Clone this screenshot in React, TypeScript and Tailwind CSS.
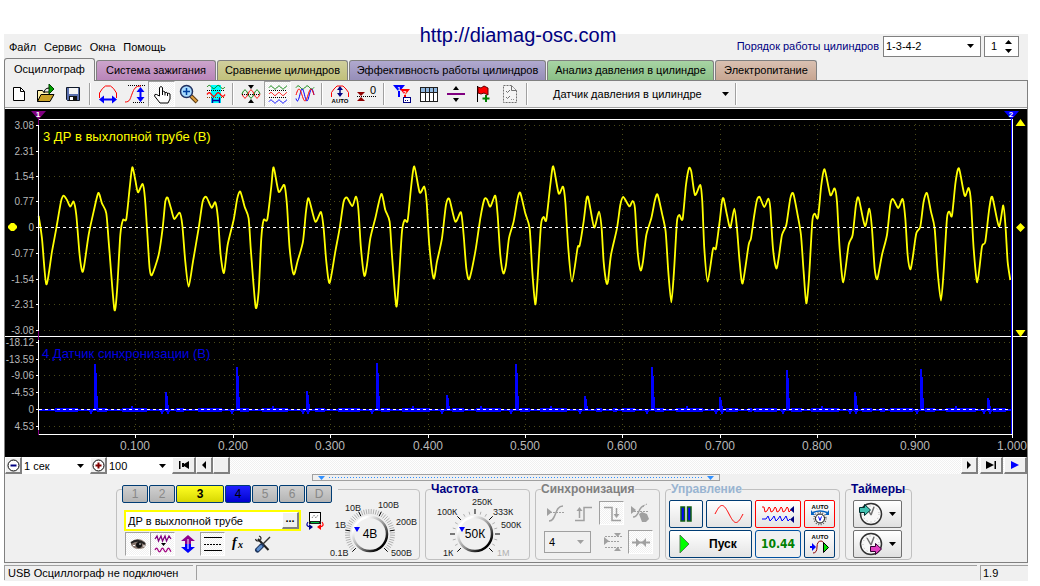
import { useState, type ReactNode } from 'react';
import { clsx } from 'clsx';

/* ---------- trace data ---------- */

// Samples of the exhaust channel, three units per pixel, split in sweeps
const exhaustSweeps = [
  {
    start: 0,
    points:
      '115,333 125,400 138,538 155,440 168,370 182,290 190,272 200,285 210,305 220,290 228,330 238,450 246,500 252,480 265,390 280,320 294,264 305,295 318,325 326,420 342,612 350,560 360,390 368,345 378,342 388,250 396,187 405,225 413,262 427,237 434,280 442,400 448,490 455,510 475,450 487,370 495,290 502,278 512,310 522,342 538,323 546,360 555,470 565,545 578,470 595,370 607,290 618,276 634,308 645,292 653,340 661,450 671,504 682,420 700,345 711,280 720,260 733,305 745,340 752,440 766,606 775,560 783,400 790,345 801,343 813,245 820,187 835,260 852,240 860,300 868,430 880,508 892,468 908,410 917,320 925,280 945,350 962,321 970,370 978,470 988,534 1005,440 1018,370',
  },
  {
    start: 1020,
    points:
      '10,290 20,278 36,303 47,275 54,310 62,430 72,512 80,480 90,400 105,340 123,267 135,315 148,350 155,450 168,604 176,520 185,380 193,345 202,347 212,250 222,184 238,262 252,245 259,290 267,420 280,520 290,470 305,400 317,300 327,282 345,350 362,322 370,390 378,490 387,522 405,440 420,340 432,283 440,283 450,305 465,272 472,330 480,450 489,505 497,480 506,400 520,350 532,280 540,264 555,325 568,370 576,500 585,598 592,520 602,360 610,336 618,345 630,240 639,184 655,265 668,245 675,290 684,430 695,530 712,428 718,422 730,350 738,285 743,275 750,310 762,368 776,320 784,370 790,470 798,532 803,530 812,450 830,370 840,300 849,276 867,304 877,288 884,310 892,440 901,496 908,470 918,390 933,340 944,285 952,269 965,325 976,380 984,500 993,592 1001,500 1010,350 1017,330 1027,342 1037,240 1046,190',
  },
  {
    start: 2070,
    points:
      '3,200 14,270 30,240 36,290 42,430 52,530 68,432 77,430 88,350 95,290 100,281 110,330 120,368 132,311 140,370 148,470 157,535 175,420 182,400 192,330 200,285 208,276 222,306 234,281 240,310 248,430 258,490 265,460 275,390 288,360 300,280 309,266 322,330 332,390 340,500 348,595 356,520 366,350 373,326 383,338 393,240 403,193 420,270 433,250 440,290 448,430 459,532 475,420 487,390 497,300 505,279 524,363 537,311 545,370 553,490 561,522 575,450 590,390 600,300 608,282 624,309 637,282 645,340 652,450 660,493 667,460 678,385 690,365 700,290 710,264 722,320 733,370 742,500 752,587 760,500 770,340 777,320 785,332 796,230 806,190 823,272 835,249 842,290 850,430 861,532 875,425 885,410 897,310 906,276 926,364 939,301 946,370 952,470 960,525',
  },
];

const TOP = 105;

const exhaust = exhaustSweeps.flatMap(({ start, points }) =>
  points.split(' ').map((p) => {
    const [x, y] = p.split(',').map(Number);
    return [(start + x) / 3 + 0.3, TOP + y / 3] as const;
  })
);

// Joins samples with cubic segments whose control points keep peaks flat
function smoothPath(pts: readonly (readonly [number, number])[]) {
  let d = `M${pts[0][0]},${pts[0][1]}`;
  for (let i = 0; i < pts.length - 1; i++) {
    const p0 = pts[Math.max(0, i - 1)];
    const p1 = pts[i];
    const p2 = pts[i + 1];
    const p3 = pts[Math.min(pts.length - 1, i + 2)];
    const k = 8;
    d += `C${p1[0] + (p2[0] - p0[0]) / k},${p1[1] + (p2[1] - p0[1]) / k} ${p2[0] - (p3[0] - p1[0]) / k},${p2[1] - (p3[1] - p1[1]) / k} ${p2[0]},${p2[1]}`;
  }
  return d;
}

const syncSpikes = [
  [94, 364], [165, 392], [236, 367], [306, 391], [376, 363], [446, 395], [515, 364],
  [584, 396], [651, 367], [719, 397], [786, 370], [854, 392], [920, 369], [987, 398],
];

const syncNoise = [
  [55, 78], [97, 107], [122, 147], [176, 184], [198, 222], [240, 249], [262, 288], [315, 325],
  [338, 360], [381, 390], [402, 430], [452, 464], [476, 501], [520, 530], [540, 567], [596, 602],
  [613, 617], [622, 635], [655, 664], [676, 703], [726, 738], [748, 752], [754, 777], [791, 802],
  [811, 839], [862, 872], [880, 885], [890, 913], [925, 935], [946, 976], [993, 1006],
];

const syncDips = [91, 162, 168, 232, 303, 308, 372, 442, 511, 580, 647, 716, 722, 783, 850, 856, 917, 984, 990];
const syncBumps = [132, 273, 413, 481, 551, 687, 822, 956];

const upperScale = [
  [125, '3.08'], [151, '2.31'], [176, '1.54'], [201, '0.77'], [227, '0'],
  [253, '-0.77'], [279, '-1.54'], [304, '-2.31'], [330, '-3.08'],
] as const;

const lowerScale = [
  [342, '-18.12'], [359, '-13.59'], [375, '-9.06'], [392, '-4.53'], [409, '0'], [426, '4.53'],
] as const;

const timeScale = [
  [135, '0.100'], [233, '0.200'], [330, '0.300'], [428, '0.400'], [525, '0.500'],
  [622, '0.600'], [720, '0.700'], [817, '0.800'], [915, '0.900'], [1012, '1.000'],
] as const;

/* ---------- chart ---------- */

function Chart() {
  return (
    <svg
      viewBox="5 109 1022 348"
      className="block w-full bg-black font-['Liberation_Sans',sans-serif]"
      role="img"
      aria-label="Осциллограмма"
    >
      <g stroke="#4a4a18" strokeDasharray="1 4" shapeRendering="crispEdges">
        {[...upperScale, ...lowerScale].map(([y, label]) =>
          label === '0' ? null : <path key={y} d={`M44 ${y + 0.5}H1010`} />
        )}
        {timeScale.slice(0, 9).map(([x]) => (
          <path key={x} d={`M${x + 0.5} 124V433`} />
        ))}
      </g>

      <g fill="#b8b8b8" fontSize="10" textAnchor="end">
        {[...upperScale, ...lowerScale].map(([y, label]) => (
          <text key={y} x="34" y={y + 4}>
            {label}
          </text>
        ))}
      </g>
      <g fill="#b8b8b8" fontSize="12" textAnchor="middle">
        {timeScale.map(([x, label]) => (
          <text key={x} x={x} y="450">
            {label}
          </text>
        ))}
      </g>

      <text x="43" y="141" fontSize="13" fill="#ffff00">
        3 ДР в выхлопной трубе (В)
      </text>
      <text x="42" y="358" fontSize="13" fill="#0000e0">
        4 Датчик синхронизации (В)
      </text>

      {/* exhaust pressure */}
      <path d={smoothPath(exhaust)} fill="none" stroke="#ffff00" strokeWidth="1.8" strokeLinejoin="round" />

      {/* sync sensor */}
      <g fill="#0000ff" shapeRendering="crispEdges">
        <rect x="39" y="409" width="973" height="2" />
        {syncNoise.map(([a, b]) => (
          <rect key={a} x={a} y="408" width={b - a} height="4" />
        ))}
        {syncDips.map((x) => (
          <path key={x} d={`M${x - 2} 410h4l-1 4h-2z`} />
        ))}
        {syncBumps.map((x) => (
          <rect key={x} x={x - 1} y="406" width="2" height="3" />
        ))}
        {syncSpikes.map(([x, y]) => (
          <path key={x} d={`M${x} 410V${y}h2l1 ${(410 - y) * 0.4}l1 ${(410 - y) * 0.6}z`} />
        ))}
      </g>

      <g stroke="#ffffff" shapeRendering="crispEdges">
        <path d="M38.5 119V435M1012.5 119V438M38 119.5H1013M5 336.5H1027M38 434.5H1013" />
        <path d="M39 227.5H1012M39 409.5H1012" strokeDasharray="3 3" />
        {[...upperScale, ...lowerScale].map(([y]) => (
          <path key={y} d={`M36 ${y + 0.5}h3`} />
        ))}
        {timeScale.map(([x]) => (
          <path key={x} d={`M${x + 0.5} 435v3`} />
        ))}
      </g>
      <path d="M1011.5 119V434" stroke="#0000ff" shapeRendering="crispEdges" />
      <path d="M38.5 119v6M38.5 331v9M38.5 430v5" stroke="#800080" shapeRendering="crispEdges" />

      {/* cursors and level markers */}
      <path d="M31 111h15l-7 8h-1z" fill="#800080" />
      <path d="M1004 111h15l-7 8h-1z" fill="#0000ff" />
      <g fill="#ffffff" fontSize="8" fontWeight="bold" textAnchor="middle">
        <text x="38" y="117">1</text>
        <text x="1011" y="117">2</text>
      </g>
      <g fill="#ffff00">
        <path d="M11 223h3l3 3v2l-3 3h-3l-3-3v-2z" />
        <path d="M1020.500 119l5 7h-10zM1020.500 337l5-7h-10zM1020.500 223l4.500 4.500-4.500 4.500-4.500-4.500z" />
      </g>
    </svg>
  );
}

/* ---------- icons ---------- */

function wave(x0: number, x1: number, y: number, amp: number, period: number, phase = 0) {
  let d = '';
  for (let x = x0; x <= x1; x += 0.5) {
    const v = y - amp * Math.sin(((x - x0) / period + phase) * Math.PI * 2);
    d += `${d ? 'L' : 'M'}${x},${v.toFixed(2)}`;
  }
  return d;
}

function Icon({ children, className }: { children: ReactNode; className?: string }) {
  return (
    <svg viewBox="0 0 22 22" className={clsx('block size-[22px] shrink-0', className)} fill="none" aria-hidden>
      {children}
    </svg>
  );
}

const NewIcon = (
  <Icon>
    <path d="M5.500 4.500h7l4 4v9h-11z" fill="#fff" stroke="#000" />
    <path d="M12.500 4.500v4h4" stroke="#000" />
  </Icon>
);

const OpenIcon = (
  <Icon>
    <path d="M2.500 18.500v-11h5l1 1.500h6v3" fill="#fff3b0" stroke="#000" />
    <path d="M2.500 18.500l3.500-7h13l-4 7z" fill="#c9a227" stroke="#000" />
    <path d="M14 1l5 5-5 5z" fill="#00a000" stroke="#004000" />
    <path d="M9 10c0-3 2-5 5-5" stroke="#000" />
  </Icon>
);

const SaveIcon = (
  <Icon>
    <path d="M4.500 4.500h13v13h-12l-1-1z" fill="#5a6fae" stroke="#101828" />
    <rect x="7" y="5" width="9" height="6" fill="#f4f4f4" />
    <rect x="7" y="13" width="8" height="5" fill="#111" />
    <rect x="8" y="14" width="3" height="3" fill="#fff" />
  </Icon>
);

const HScaleIcon = (
  <Icon>
    <path d="M2.500 15V10l3-4.500L8.500 3h5L16.500 5.500l3 4.500v5" stroke="#ff0000" />
    <path d="M5 16.500h12" stroke="#0000ff" strokeWidth="2" />
    <path d="M2 16.500l5-4v8zM20 16.500l-5-4v8z" fill="#0000ff" />
  </Icon>
);

const VScaleIcon = (
  <Icon>
    <path d="M4 2.500h17M9 19.500h12" stroke="#000" strokeDasharray="1 1" />
    <path d="M1 19c5 0 5-3 7-8s3-8 9-8" stroke="#ff0000" />
    <path d="M16.500 7v9" stroke="#0000ff" strokeWidth="2" />
    <path d="M16.500 4l4 5h-8zM16.500 19l4-5h-8z" fill="#0000ff" />
  </Icon>
);

const HandIcon = (
  <Icon>
    <path
      d="M8.500 13V4.500q1.500-2 3 0V9q1-1.500 2.500 0v1q1-1.500 2.500 0v1q1-1.500 2.500 0v5l-2 4H9l-5.500-7q0-2.500 2-1.500z"
      fill="#fff"
      stroke="#000"
    />
    <path d="M11.500 9v3M14 10v2.500M16.500 11v2" stroke="#000" />
  </Icon>
);

const ZoomIcon = (
  <Icon>
    <path d="M13 13l6 6" stroke="#5a3a10" strokeWidth="4" />
    <path d="M13 13l5.500 5.500" stroke="#e0a040" strokeWidth="2" />
    <circle cx="8.500" cy="8.500" r="6" fill="#a8dcff" stroke="#203060" strokeWidth="1.500" />
    <path d="M8.500 5v7M5 8.500h7" stroke="#0040a0" strokeWidth="1.500" />
  </Icon>
);

const MeasureIcon = (
  <Icon>
    <rect x="6" y="2" width="10" height="18" fill="#00ffff" />
    <path d={wave(2, 20, 4, 1.6, 9)} stroke="#008000" />
    <path d="M2 7.500h18" stroke="#000" strokeDasharray="1 1" />
    <path d={wave(2, 20, 11.5, 1.8, 9)} stroke="#ff0000" strokeWidth="1.300" />
    <path d="M2 14.500h18" stroke="#804000" strokeDasharray="1 1" />
    <path d="M7.500 15v5M14.500 15v5M8 17.500h6" stroke="#0000a0" strokeWidth="1.400" />
  </Icon>
);

const AlignIcon = (
  <Icon>
    <path d={wave(2, 20, 11, 4, 12)} stroke="#008000" />
    <path d={wave(2, 20, 11, 4, 12, 0.5)} stroke="#ff0000" />
    <path d="M2 11.500h18" stroke="#000" strokeDasharray="1 1" />
    <path d="M8 2h6l-3 4zM8 20h6l-3-4z" fill="#000" />
  </Icon>
);

const SplitWavesIcon = (
  <Icon>
    <path d={wave(2, 20, 4.5, 1.5, 8)} stroke="#008000" />
    <path d={wave(2, 20, 11, 1.5, 8)} stroke="#ff0000" />
    <path d={wave(2, 20, 18.5, 1.5, 8)} stroke="#0000ff" />
    <path d="M2 7.500h18M2 14.500h18" stroke="#000" strokeDasharray="1 1" />
  </Icon>
);

const OverlayWavesIcon = (
  <Icon>
    <path d={wave(2, 20, 4.5, 1.6, 9)} stroke="#008000" />
    <path d={wave(2, 20, 12, 6, 9.5, 0.6)} stroke="#0000ff" />
    <path d={wave(2, 20, 12, 6, 12, 0)} stroke="#ff0000" />
  </Icon>
);

const AutoScaleIcon = (
  <Icon>
    <path d="M2.500 14V9.500L5 6l3-3h6l3 3 2.500 3.500V14" stroke="#ff0000" />
    <path d="M11 5v7" stroke="#000080" strokeWidth="1.500" />
    <path d="M11 3l3 4H8zM11 14l3-4H8z" fill="#000080" />
    <text x="11" y="20" fontSize="6" fontWeight="bold" textAnchor="middle" fill="#000">
      AUTO
    </text>
  </Icon>
);

const ZeroIcon = (
  <Icon>
    <path d="M1 13.500h19" stroke="#000" strokeDasharray="1 1" />
    <path d="M1 9h8l-4 4zM1 18h8l-4-4z" fill="#900000" />
    <text x="17" y="11" fontSize="11" textAnchor="middle" fill="#000">
      0
    </text>
  </Icon>
);

const FilterIcon = (
  <Icon>
    <path d="M2 2h12l-5 6v6H7V8z" fill="#0000ff" />
    <path d="M9 6h10l-4 5v5h-2v-5z" fill="#ff0000" />
    <text x="8" y="8" fontSize="6" fontWeight="bold" textAnchor="middle" fill="#fff">1</text>
    <text x="14" y="12" fontSize="6" fontWeight="bold" textAnchor="middle" fill="#fff">2</text>
    <rect x="12.500" y="14.500" width="7" height="5" fill="#fff" stroke="#000080" />
    <path d="M14 17.500h4" stroke="#000080" strokeDasharray="1 1" />
  </Icon>
);

const TableIcon = (
  <Icon>
    <rect x="2.500" y="4.500" width="17" height="14" fill="#fff" stroke="#202020" />
    <rect x="3" y="5" width="16" height="4" fill="#90b8e0" />
    <path d="M2.500 9.500h17M7.500 5v13M11.500 5v13M15.500 5v13" stroke="#202020" />
  </Icon>
);

const DividerIcon = (
  <Icon>
    <path d="M2 11h18" stroke="#800080" strokeWidth="2" />
    <path d="M8 7h6l-3-4zM8 15h6l-3 4z" fill="#000" />
  </Icon>
);

const FlagIcon = (
  <Icon>
    <path d="M5.500 3v16" stroke="#000" />
    <path d="M6 4l3 1 3-2 4 2v7l-4-2-3 1-3-1z" fill="#ff0000" stroke="#600000" />
    <path d="M14 12v7M10.500 15.500h7" stroke="#008000" strokeWidth="2" />
  </Icon>
);

const ChecklistIcon = (
  <Icon>
    <path d="M4.500 2.500h8l5 5v12h-13z" fill="#f4f4f4" stroke="#707070" strokeDasharray="2 1" />
    <path d="M12.500 2.500v5h5M7 8l1.500 1.500L11 7M7 14l1.500 1.500L11 13" stroke="#707070" />
    <path d="M12 16.500h4" stroke="#909090" strokeDasharray="1 1" />
  </Icon>
);

const EyeIcon = (
  <Icon>
    <path d="M4 9q7-6 14 0l1 3-2 3q-6 2-10 0l-3-3z" fill="#8a7a72" />
    <path d="M4 10q7-5 14 1" stroke="#222" strokeWidth="2" />
    <circle cx="12" cy="12" r="3" fill="#111" />
    <path d="M6 12.500h2M16 13h2" stroke="#fff" />
    <circle cx="13" cy="11" r=".8" fill="#fff" />
  </Icon>
);

const InvertIcon = (
  <Icon>
    <path d="M3 6l2-3 1.500 5L9 3l1.500 5L13 3l1.500 5L17 3l2 3" stroke="#800080" strokeWidth="1.300" />
    <path d="M9 10h5l-2.500 3z" fill="#000" />
    <path d={wave(3, 19, 17, 1.8, 6)} stroke="#a00080" strokeWidth="1.200" />
  </Icon>
);

const UpDownIcon = (
  <Icon>
    <path d="M11 2l7 6h-4v3H8V8H4z" fill="#900090" />
    <path d="M11 20l7-6h-4v-3H8v3H4z" fill="#0000ff" />
    <path d="M11 6v10" stroke="#fff" />
  </Icon>
);

const LevelsIcon = (
  <Icon>
    <path d="M2 4.500h18M2 17.500h18" stroke="#000" />
    <path d="M2 11.500h18" stroke="#000" strokeDasharray="2 1" />
  </Icon>
);

const FormulaIcon = (
  <Icon>
    <text x="5" y="14" fontSize="14" fontWeight="bold" fontStyle="italic" fill="#000" fontFamily="Liberation Serif, serif">
      f
    </text>
    <text x="11" y="15" fontSize="10" fontWeight="bold" fontStyle="italic" fill="#000" fontFamily="Liberation Serif, serif">
      x
    </text>
  </Icon>
);

const ToolsIcon = (
  <Icon>
    <path d="M6 6l10.500 11" stroke="#202020" strokeWidth="2" />
    <path d="M3.500 6q1 3 4 1.500M7 3q3 1 1.500 4" stroke="#202020" strokeWidth="1.200" />
    <path d="M18 4L9 13" stroke="#303030" strokeWidth="1.500" />
    <path d="M9.500 13l-4 4" stroke="#203860" strokeWidth="5" strokeLinecap="round" />
    <path d="M9 13.500l-3 3" stroke="#6090d0" strokeWidth="3" strokeLinecap="round" />
  </Icon>
);

const ProbeIcon = (
  <Icon>
    <rect x="5.500" y="2.500" width="11" height="9" fill="#fff" stroke="#000" />
    <rect x="5" y="11" width="12" height="3" fill="#1a1a1a" />
    <path d="M7 12.500h8" stroke="#00c040" />
    <path d="M8 8l2-3 2 3 2-3" stroke="#707070" strokeDasharray="1 1" />
    <path d="M4 12q-3 4 2 5" stroke="#0000a0" strokeWidth="1.200" />
    <path d="M18 12q3 4-2 5" stroke="#ff0000" strokeWidth="1.200" />
    <path d="M9 17l-4-3v6z" fill="#000080" />
    <path d="M13 17l4-3v6z" fill="#ff0000" />
  </Icon>
);

const grey = '#a0a0a0';

const TrigLevelIcon = (
  <Icon>
    <path d="M3 6l5 4-5 4z" fill={grey} />
    <path d="M3 10.500h17" stroke={grey} strokeDasharray="2 1" />
    <path d="M5 19c8 0 5-15 14-15" stroke={grey} strokeWidth="1.500" />
  </Icon>
);

const TrigRiseIcon = (
  <Icon>
    <path d="M3 18.500h9v-13h8" stroke={grey} strokeWidth="1.500" />
    <path d="M7.500 16V8" stroke={grey} strokeWidth="1.500" />
    <path d="M7.500 5l3 4h-6z" fill={grey} />
  </Icon>
);

const TrigFallIcon = (
  <Icon>
    <path d="M3 5.500h8v13h9" stroke={grey} strokeWidth="1.500" />
    <path d="M15.500 6v8" stroke={grey} strokeWidth="1.500" />
    <path d="M15.500 16l3-4h-6z" fill={grey} />
  </Icon>
);

const TrigHandIcon = (
  <Icon>
    <path d="M2 4l5 4-5 4z" fill={grey} />
    <path d="M2 9.500h18M14 4l4-2" stroke={grey} strokeDasharray="2 1" />
    <path d="M4 15c7 0 5-11 11-11" stroke={grey} strokeWidth="1.500" />
    <path d="M10 12l3-2 5 2 2 5-3 3h-4z" fill={grey} />
  </Icon>
);

const TrigWindowIcon = (
  <Icon>
    <path d="M2 6l5 4-5 4z" fill={grey} />
    <path d="M3 5.500h17M6 10.500h12M3 16.500h17" stroke={grey} strokeDasharray="2 1" />
    <path d="M12 2h7l-3.500 4zM12 20h7l-3.500-4z" fill={grey} />
  </Icon>
);

const TrigMeetIcon = (
  <Icon>
    <path d="M2 11.500h18" stroke={grey} strokeWidth="2" />
    <path d="M6 7l4.500 4.500L6 16zM16 7l-4.500 4.500L16 16z" fill={grey} />
  </Icon>
);

function ClockIcon({ out }: { out?: boolean }) {
  return (
    <svg viewBox="0 0 26 26" className="block size-[26px]" fill="none" aria-hidden>
      <circle cx="13" cy="13" r="10.500" fill="#f8f8f8" stroke="#303030" strokeWidth="1.500" />
      <circle cx="13" cy="13" r="8" stroke="#b0b0b0" strokeDasharray="1 3" />
      <path d="M13 14l3-8M13 14L9 7" stroke="#707070" strokeWidth="1.500" />
      {out ? (
        <path d="M12.500 15.500h5v-3l6 5.500-6 5.500v-3h-5z" fill="#e040c0" stroke="#300030" />
      ) : (
        <path d="M1.500 6.500h5v-3l6 5.500-6 5.500v-3h-5z" fill="#40c0b0" stroke="#003030" />
      )}
    </svg>
  );
}

function Caret({ className }: { className?: string }) {
  return (
    <svg viewBox="0 0 7 4" className={clsx('block h-[4px] w-[7px] shrink-0', className)} aria-hidden>
      <path d="M0 0h7L3.500 4z" fill="currentColor" />
    </svg>
  );
}

/* ---------- small controls ---------- */

const hatch = 'bg-[repeating-conic-gradient(#ffffff_0_25%,#f0f0f0_0_50%)] bg-[length:2px_2px]';

function ToolButton({ title, pressed, wide, children }: { title: string; pressed?: boolean; wide?: boolean; children: ReactNode }) {
  return (
    <button
      title={title}
      aria-pressed={pressed}
      className={clsx(
        'flex items-center justify-center border',
        wide ? 'h-6 w-[25px]' : 'h-[26px] w-[27px]',
        pressed ? ['border-[#a0a0a0] border-r-white border-b-white', hatch] : 'border-transparent'
      )}
    >
      {children}
    </button>
  );
}

function Separator() {
  return <div className="mx-[3px] my-[2px] w-[2px] self-stretch border-l border-[#a0a0a0] bg-white" />;
}

interface ComboProps {
  label: string;
  options: string[];
  className?: string;
  disabled?: boolean;
}

function Combo({ label, options, className, disabled }: ComboProps) {
  return (
    <div className={clsx('relative flex items-center', className)}>
      <select aria-label={label} disabled={disabled} className="h-full w-full appearance-none bg-transparent pl-[2px] text-black outline-none">
        {options.map((o) => (
          <option key={o}>{o}</option>
        ))}
      </select>
      <Caret className="pointer-events-none absolute right-[6px]" />
    </div>
  );
}

function Bevel({ title, className, children }: { title: string; className: string; children?: ReactNode }) {
  return (
    <button
      title={title}
      className={clsx(
        'flex h-full shrink-0 items-center justify-center border border-r-2 border-b-2 border-white border-r-[#808080] border-b-[#808080] bg-[#f0f0f0]',
        className
      )}
    >
      {children}
    </button>
  );
}

function Group({ title, titleClass, className, children }: { title: string; titleClass: string; className: string; children: ReactNode }) {
  return (
    <fieldset className={clsx('h-[77px] rounded-[4px] border border-[#c0c0c0]', className)}>
      <legend className={clsx('ml-[5px] h-[12px] text-[12px] leading-[12px] font-bold', titleClass)}>{title}</legend>
      {children}
    </fieldset>
  );
}

/* ---------- knobs ---------- */

interface KnobLabel {
  x: number;
  y: number;
  text: string;
  off?: boolean;
}

function Knob({ cx, cy, value, labels, dense }: { cx: number; cy: number; value: string; labels: KnobLabel[]; dense?: boolean }) {
  const count = dense ? 46 : 19;
  const ticks = Array.from({ length: count }, (_, i) => {
    const a = ((135 + (270 * i) / (count - 1)) * Math.PI) / 180;
    const major = dense ? i % 9 === 0 : i % 3 === 0;
    const r = dense || major ? 25 : 23;
    return { a, r, major };
  });
  const id = `knob-${cx}`;
  return (
    <>
      <defs>
        <linearGradient id={id} x1="0" y1="0" x2="1" y2="1">
          <stop offset="0.200" stopColor="#ffffff" />
          <stop offset="0.550" stopColor="#909090" />
          <stop offset="0.850" stopColor="#000000" />
        </linearGradient>
      </defs>
      {ticks.map(({ a, r, major }) => (
        <path
          key={a}
          d={`M${cx + 20 * Math.cos(a)} ${cy + 20 * Math.sin(a)}L${cx + r * Math.cos(a)} ${cy + r * Math.sin(a)}`}
          stroke={major ? '#000000' : '#b0b0b0'}
        />
      ))}
      <circle cx={cx} cy={cy} r="17" fill="#f0f0f0" stroke={`url(#${id})`} strokeWidth="2.500" />
      <path d={`M${cx - 16} ${cy - 7}h6l-3 5z`} fill="#0000ff" />
      <text x={cx} y={cy + 4} fontSize="12" textAnchor="middle" fill="#000">
        {value}
      </text>
      {labels.map((l) => (
        <text key={l.text} x={l.x} y={l.y} fontSize="9" fill={l.off ? '#b0b0b0' : '#202020'}>
          {l.text}
        </text>
      ))}
    </>
  );
}

/* ---------- page sections ---------- */

const tabs = [
  { name: 'Система зажигания', style: 'w-[120px] from-[#cca4cc] to-[#b985b9]' },
  { name: 'Сравнение цилиндров', style: 'w-[131px] from-[#d0cf9c] to-[#c1c07b]' },
  { name: 'Эффективность работы цилиндров', style: 'w-[197px] from-[#b0a9cf] to-[#968eb8]' },
  { name: 'Анализ давления в цилиндре', style: 'w-[167px] from-[#a8d4a4] to-[#8abf86]' },
  { name: 'Электропитание', style: 'w-[102px] from-[#d9c0b1] to-[#c7a692]' },
];

function MenuBar() {
  return (
    <div className="flex h-[24px] items-center pr-[9px] pl-[5px]">
      <nav className="flex flex-1 gap-[8px] pt-px">
        {['Файл', 'Сервис', 'Окна', 'Помощь'].map((item) => (
          <button key={item}>{item}</button>
        ))}
      </nav>
      <label htmlFor="order" className="mr-[4px] text-[#000080]">
        Порядок работы цилиндров
      </label>
      <div className="relative flex h-[21px] w-[98px] items-center border border-[#808080] bg-white">
        <select id="order" className="h-full w-full appearance-none pl-[2px] outline-none">
          <option>1-3-4-2</option>
          <option>1-2-4-3</option>
        </select>
        <Caret className="pointer-events-none absolute right-[6px]" />
      </div>
      <div className="ml-[3px] flex h-[21px] w-[35px] items-center border border-[#808080] bg-white">
        <input aria-label="Номер цилиндра" defaultValue="1" className="w-[20px] pl-[6px] outline-none" />
        <div className="flex flex-col gap-[5px]">
          <button aria-label="Больше"><Caret className="rotate-180" /></button>
          <button aria-label="Меньше"><Caret /></button>
        </div>
      </div>
    </div>
  );
}

function Tabs() {
  return (
    <div className="flex h-[22px] items-end gap-px" role="tablist">
      <button role="tab" aria-selected className="-mb-px h-[23px] w-[91px] rounded-t-[3px] border border-b-0 border-[#808080] bg-[#f0f0f0] pb-[2px]">
        Осциллограф
      </button>
      {tabs.map((t) => (
        <button
          key={t.name}
          role="tab"
          aria-selected={false}
          className={clsx('h-[20px] rounded-t-[3px] border border-b-0 border-[#808080] bg-linear-to-b pb-px whitespace-nowrap', t.style)}
        >
          {t.name}
        </button>
      ))}
    </div>
  );
}

function Toolbar() {
  return (
    <div className="flex h-[27px] items-center border-b border-[#a0a0a0]">
      <ToolButton title="Новый">{NewIcon}</ToolButton>
      <ToolButton title="Открыть">{OpenIcon}</ToolButton>
      <ToolButton title="Сохранить">{SaveIcon}</ToolButton>
      <Separator />
      <ToolButton title="Масштаб по времени">{HScaleIcon}</ToolButton>
      <ToolButton title="Масштаб по уровню">{VScaleIcon}</ToolButton>
      <ToolButton title="Перемещение" pressed>{HandIcon}</ToolButton>
      <ToolButton title="Увеличить">{ZoomIcon}</ToolButton>
      <ToolButton title="Измерение">{MeasureIcon}</ToolButton>
      <Separator />
      <ToolButton title="Выровнять">{AlignIcon}</ToolButton>
      <ToolButton title="Раздельно" pressed>{SplitWavesIcon}</ToolButton>
      <ToolButton title="Совместно">{OverlayWavesIcon}</ToolButton>
      <Separator />
      <ToolButton title="Автомасштаб">{AutoScaleIcon}</ToolButton>
      <ToolButton title="Установить ноль">{ZeroIcon}</ToolButton>
      <Separator />
      <ToolButton title="Фильтры">{FilterIcon}</ToolButton>
      <ToolButton title="Таблица">{TableIcon}</ToolButton>
      <ToolButton title="Разделитель">{DividerIcon}</ToolButton>
      <ToolButton title="Метка">{FlagIcon}</ToolButton>
      <ToolButton title="Список">{ChecklistIcon}</ToolButton>
      <Separator />
      <button className="flex w-[201px] items-center justify-between pr-[3px] pl-[22px]">
        Датчик давления в цилиндре
        <Caret />
      </button>
      <Separator />
    </div>
  );
}

function TimeBar() {
  return (
    <div className={clsx('flex h-[17px] items-stretch', hatch)}>
      <Bevel title="Уменьшить" className="w-[17px]">
        <svg viewBox="0 0 13 13" className="size-[13px]" fill="#fff" aria-hidden>
          <circle cx="6.500" cy="6.500" r="5.500" stroke="#000" />
          <path d="M3.500 6.500h6" stroke="#000080" strokeWidth="2" />
        </svg>
      </Bevel>
      <Combo label="Длительность" options={['1 сек', '2 сек']} className="w-[68px] bg-white" />
      <Bevel title="Увеличить" className="w-[17px]">
        <svg viewBox="0 0 13 13" className="size-[13px]" fill="#fff" aria-hidden>
          <circle cx="6.500" cy="6.500" r="5.500" stroke="#000" />
          <path d="M3.500 6.500h6M6.500 3.500v6" stroke="#800000" strokeWidth="2" />
        </svg>
      </Bevel>
      <Combo label="Масштаб" options={['100', '50']} className="w-[65px] bg-white" />
      <Bevel title="В начало" className="w-[24px]">
        <svg viewBox="0 0 10 8" className="h-[8px] w-[10px]" aria-hidden>
          <path d="M0 0h1.500v8H0zM10 0v8L5 5v1H3V2h2v1z" />
        </svg>
      </Bevel>
      <Bevel title="Назад" className="w-[17px]">
        <svg viewBox="0 0 4 8" className="h-[8px] w-[4px]" aria-hidden>
          <path d="M4 0v8L0 4z" />
        </svg>
      </Bevel>
      <Bevel title="Прокрутка" className="w-[17px]" />
      <div className="flex-1" />
      <Bevel title="Вперёд" className="mr-[2px] w-[17px]">
        <svg viewBox="0 0 4 8" className="h-[8px] w-[4px]" aria-hidden>
          <path d="M0 0v8l4-4z" />
        </svg>
      </Bevel>
      <Bevel title="В конец" className="mr-px w-[23px]">
        <svg viewBox="0 0 10 8" className="h-[8px] w-[10px]" aria-hidden>
          <path d="M8.500 0H10v8H8.500zM0 0l8 4-8 4z" />
        </svg>
      </Bevel>
      <Bevel title="Воспроизвести" className="w-[23px]">
        <svg viewBox="0 0 8 8" className="size-[8px]" fill="#0000ff" aria-hidden>
          <path d="M0 0l8 4-8 4z" />
        </svg>
      </Bevel>
    </div>
  );
}

function Splitter() {
  return (
    <div className="mx-auto flex h-[7px] w-2/5 items-center border border-[#a0a0a0] px-[5px] text-[#3090ff]">
      <Caret />
      <div className="mx-[4px] h-px flex-1 bg-[repeating-linear-gradient(90deg,#3090ff_0_1px,transparent_1px_3px)]" />
      <Caret />
    </div>
  );
}

function Channels() {
  const [active, setActive] = useState('3');
  return (
    <div className="mt-[6px] flex h-[71px] w-[304px] rounded-[4px] border border-[#c0c0c0]">
      <div className="w-[210px] pl-[5px]">
        <div className="-mt-[5px] flex w-[216px] gap-px bg-[#f0f0f0]">
          {['1', '2', '3', '4', '5', '6', 'D'].map((ch) => (
            <button
              key={ch}
              onClick={() => setActive(ch)}
              className={clsx(
                'h-[18px] rounded-[2px] border border-[#003c74] bg-linear-to-b text-[12px] leading-[16px]',
                ch === active ? 'w-[48px] font-bold' : 'w-[26px]',
                ch === '3' && 'from-[#ffff20] to-[#d8d800] text-black',
                ch === '4' && 'from-[#2020ff] to-[#0000d0] text-black',
                ch !== '3' && ch !== '4' && 'from-[#d0d0d0] to-[#b4b4b4] text-[#888888]'
              )}
            >
              {ch}
            </button>
          ))}
        </div>
        <div className="mt-[7px] flex items-center gap-[3px] pl-[2px]">
          <div className="flex h-[21px] w-[177px] shrink-0 items-center border-2 border-[#ffff00] bg-white">
            <input aria-label="Название канала" defaultValue="ДР в выхлопной трубе" className="w-[156px] pl-[2px] outline-none" />
            <Bevel title="Выбрать" className="w-[17px] pb-[4px] font-bold">...</Bevel>
          </div>
          <button title="Подключение" className="-my-px">{ProbeIcon}</button>
        </div>
        <div className="mt-px flex pl-[3px]">
          <ToolButton title="Показать" pressed wide>{EyeIcon}</ToolButton>
          <ToolButton title="Фильтр" pressed wide>{InvertIcon}</ToolButton>
          <ToolButton title="Сдвиг" wide>{UpDownIcon}</ToolButton>
          <ToolButton title="Уровни" pressed wide>{LevelsIcon}</ToolButton>
          <ToolButton title="Формула" wide>{FormulaIcon}</ToolButton>
          <ToolButton title="Настройки" wide>{ToolsIcon}</ToolButton>
        </div>
      </div>
      <svg viewBox="327 490 92 69" className="h-[69px] w-[92px]" role="img" aria-label="Диапазон 4В">
        <Knob
          cx={370}
          cy={534}
          value="4В"
          dense
          labels={[
            { x: 330, y: 556, text: '0.1В' },
            { x: 335, y: 528, text: '1В' },
            { x: 345, y: 511, text: '10В' },
            { x: 378, y: 508, text: '100В' },
            { x: 396, y: 525, text: '200В' },
            { x: 391, y: 556, text: '500В' },
          ]}
        />
      </svg>
    </div>
  );
}

function RunButton({ title, className, children }: { title: string; className: string; children: ReactNode }) {
  return (
    <button
      title={title}
      className={clsx('flex h-[28px] items-center justify-center rounded-[2px] border bg-linear-to-b from-white to-[#e4e4e4]', className)}
    >
      {children}
    </button>
  );
}

function ControlGroup() {
  return (
    <Group title="Управление" titleClass="text-[#99b4d1]" className="w-[175px]">
      <div className="flex flex-col gap-[2px] pt-[5px] pl-[3px]">
        <div className="flex gap-[3px]">
          <RunButton title="Пауза" className="w-[34px] border-[#003c74]">
            <svg viewBox="0 0 12 16" className="h-[16px] w-[12px]" fill="#0000ff" stroke="#106010" strokeWidth="1.500" aria-hidden>
              <path d="M1 1h3.500v14H1zM7.500 1H11v14H7.500z" />
            </svg>
          </RunButton>
          <RunButton title="Сигнал" className="w-[46px] border-[#003c74]">
            <svg viewBox="0 0 30 20" className="h-[20px] w-[30px]" fill="none" aria-hidden>
              <path d={wave(1, 29, 10, 8.5, 28)} stroke="#ff0000" />
            </svg>
          </RunButton>
          <RunButton title="Поток" className="w-[46px] border-[#ff0000]">
            <svg viewBox="0 0 34 18" className="h-[18px] w-[34px]" fill="none" aria-hidden>
              <path d="M1 2h2l1 5 2-1 2-4 1 1 1 4 2-1 2-4 1 1 1 4 2-1 2-4 1 1 1 4 2-1 2-4 1 1 1 4 2-2" stroke="#ff0000" />
              <path d="M1 14h4l2-3 2 5 2-2 2-3 2 5 2-2 2-3 2 5 2-2 2-3 2 5 2-2" stroke="#0000ff" />
              <path d="M33 1v7l-4-3.500zM33 11v7l-4-3.500z" fill="#000080" />
            </svg>
          </RunButton>
          <RunButton title="Авто диапазон" className="w-[31px] border-[#ff0000]">
            <svg viewBox="0 0 24 24" className="size-[24px]" fill="none" aria-hidden>
              <text x="12" y="7" fontSize="6" fontWeight="bold" textAnchor="middle" fill="#000">AUTO</text>
              <path d="M5 10.500q7-3 14 0" stroke="#0060c0" strokeWidth="1.500" />
              <path d="M3 8v5h4zM21 8v5h-4z" fill="#0060c0" />
              <circle cx="12" cy="16.500" r="6" stroke="#606060" strokeWidth="1.500" strokeDasharray="1 1.500" />
              <circle cx="12" cy="16.500" r="4.500" fill="#fff" stroke="#000" />
              <path d="M10.500 14.500l1.500 4 1.500-4" stroke="#0000ff" />
            </svg>
          </RunButton>
        </div>
        <div className="flex gap-[3px]">
          <button className="flex h-[28px] w-[83px] items-center rounded-[2px] border border-[#003c74] bg-linear-to-b from-white to-[#e4e4e4] pl-[9px] text-[12px] font-bold">
            <svg viewBox="0 0 11 20" className="mr-[19px] h-[20px] w-[11px]" aria-hidden>
              <path d="M1 1l9 9-9 9z" fill="#00ff00" stroke="#508050" />
            </svg>
            Пуск
          </button>
          <output className="flex h-[28px] w-[46px] items-center justify-center rounded-[3px] border border-[#0050a0] font-['DejaVu_Sans_Condensed','DejaVu_Sans',sans-serif] text-[12px] font-bold text-[#008000]">
            10.44
          </output>
          <RunButton title="Авто запуск" className="w-[31px] border-[#003c74]">
            <svg viewBox="0 0 24 24" className="size-[24px]" fill="none" aria-hidden>
              <text x="12" y="7" fontSize="6" fontWeight="bold" textAnchor="middle" fill="#000">AUTO</text>
              <path d="M5 21q4 0 4-6t4-6q3 0 3 5" stroke="#900000" />
              <path d="M2 15h3" stroke="#0000ff" strokeWidth="2" />
              <path d="M4 11l4 4-4 4z" fill="#0000ff" />
              <path d="M15.500 10.500l5 5-5 5z" fill="#00e000" stroke="#000" />
            </svg>
          </RunButton>
        </div>
      </div>
    </Group>
  );
}

function TimersGroup() {
  return (
    <Group title="Таймеры" titleClass="text-[#000080]" className="w-[67px]">
      <div className="flex flex-col gap-[2px] pt-[5px] pl-[7px]">
        {[false, true].map((out) => (
          <button
            key={String(out)}
            title={out ? 'Таймер остановки' : 'Таймер запуска'}
            className="flex h-[28px] w-[49px] items-center gap-[5px] rounded-[2px] border border-[#707070] bg-linear-to-b from-white to-[#e0e0e0] pl-[4px]"
          >
            <ClockIcon out={out} />
            <Caret />
          </button>
        ))}
      </div>
    </Group>
  );
}

function SyncGroup() {
  return (
    <Group title="Синхронизация" titleClass="text-[#808080]" className="w-[125px]">
      <div className="flex justify-between pt-[6px] pr-[6px] pl-[6px]">
        <ToolButton title="Уровень" wide>{TrigLevelIcon}</ToolButton>
        <ToolButton title="По фронту" wide>{TrigRiseIcon}</ToolButton>
        <ToolButton title="По спаду" pressed wide>{TrigFallIcon}</ToolButton>
        <ToolButton title="Вручную" wide>{TrigHandIcon}</ToolButton>
      </div>
      <div className="flex items-center pt-[5px] pr-[6px] pl-[8px]">
        <Combo label="Канал" options={['4', '3']} className="h-[22px] w-[47px] border border-[#a0a0a0] pl-[2px] text-[#a0a0a0]" />
        <div className="flex flex-1 justify-end gap-[3px]">
          <ToolButton title="Окно" wide>{TrigWindowIcon}</ToolButton>
          <ToolButton title="Ждущий" pressed wide>{TrigMeetIcon}</ToolButton>
        </div>
      </div>
    </Group>
  );
}

function FrequencyGroup() {
  return (
    <Group title="Частота" titleClass="text-[#000080]" className="w-[105px]">
      <svg viewBox="425 495 103 64" className="block h-[64px] w-[103px]" role="img" aria-label="Частота 50К">
        <Knob
          cx={474}
          cy={534}
          value="50К"
          labels={[
            { x: 436, y: 515, text: '100К' },
            { x: 471, y: 505, text: '250К' },
            { x: 492, y: 515, text: '333К' },
            { x: 500, y: 528, text: '500К' },
            { x: 442, y: 556, text: '1К' },
            { x: 496, y: 556, text: '1М', off: true },
          ]}
        />
      </svg>
    </Group>
  );
}

function StatusBar() {
  return (
    <footer className="flex h-[18px] gap-[3px] pt-[2px] pb-px">
      <div className="w-[189px] border-t border-l border-[#a0a0a0] pl-[3px]">USB Осциллограф не подключен</div>
      <div className="flex-1 border-t border-l border-[#a0a0a0]" />
      <div className="w-[48px] border-t border-l border-[#a0a0a0] pl-[2px]">1.9</div>
    </footer>
  );
}

export default function App() {
  return (
    <main className="relative bg-white pt-[34px] pr-[12px] pb-[5px] pl-[4px] font-['Liberation_Sans',sans-serif] text-[11px] leading-[14px] text-black">
      <a
        href="http://diamag-osc.com"
        className="absolute top-[23px] right-[4px] left-0 mx-auto w-fit text-[20px] leading-[24px] text-[#000080]"
      >
        http://diamag-osc.com
      </a>
      <div className="bg-[#f0f0f0]">
        <MenuBar />
        <Tabs />
        <section className="border border-[#808080]">
          <Toolbar />
          <div className="border-t border-white">
            <Chart />
          </div>
          <TimeBar />
          <Splitter />
          <div className="flex gap-[5px] pt-[2px] pb-[2px] pl-[111px]">
            <Channels />
            <FrequencyGroup />
            <SyncGroup />
            <ControlGroup />
            <TimersGroup />
          </div>
        </section>
        <StatusBar />
      </div>
    </main>
  );
}
